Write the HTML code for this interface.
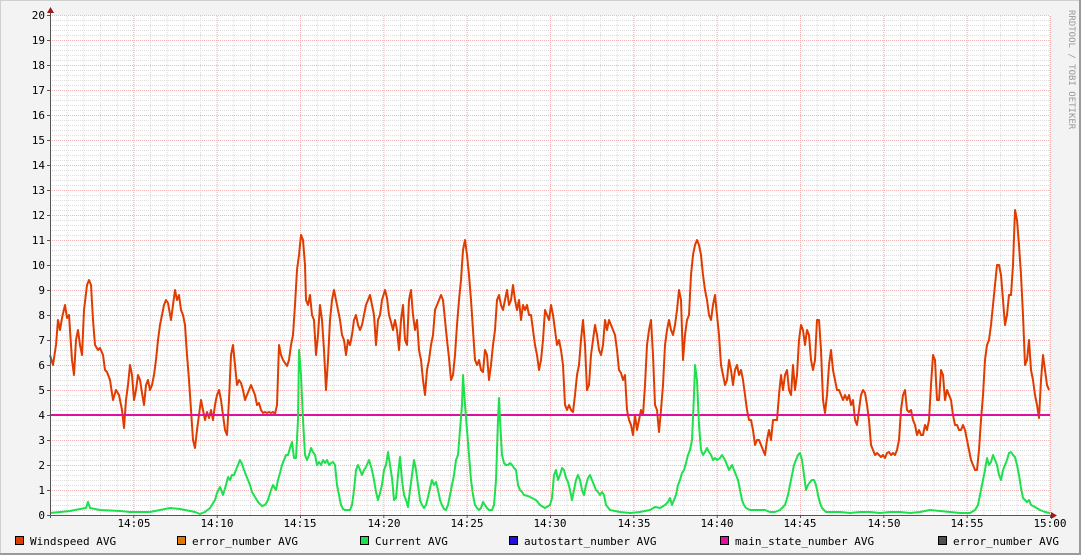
<!DOCTYPE html>
<html><head><meta charset="utf-8"><style>
html,body{margin:0;padding:0;background:#f3f3f3;}
svg{display:block;}
text{font-family:"DejaVu Sans Mono","Liberation Mono",monospace;}
</style></head><body>
<svg width="1081" height="555" viewBox="0 0 1081 555" xmlns="http://www.w3.org/2000/svg">
<defs>
<pattern id="minv" x="50" y="0" width="16.6667" height="555" patternUnits="userSpaceOnUse">
<line x1="0.5" y1="0" x2="0.5" y2="555" stroke="#dcdcdc" stroke-width="1" stroke-dasharray="1,1"/>
</pattern>
<pattern id="minh" x="0" y="15" width="1081" height="5" patternUnits="userSpaceOnUse">
<line x1="0" y1="0.5" x2="1081" y2="0.5" stroke="#dcdcdc" stroke-width="1" stroke-dasharray="1,1"/>
</pattern>
<pattern id="majv" x="50" y="0" width="83.3333" height="555" patternUnits="userSpaceOnUse">
<line x1="0.5" y1="0" x2="0.5" y2="555" stroke="#f0b4b4" stroke-width="1" stroke-dasharray="1,1"/>
</pattern>
<pattern id="majh" x="0" y="15" width="1081" height="25" patternUnits="userSpaceOnUse">
<line x1="0" y1="0.5" x2="1081" y2="0.5" stroke="#f0b4b4" stroke-width="1" stroke-dasharray="1,1"/>
</pattern>
</defs>
<rect x="0" y="0" width="1081" height="555" fill="#f3f3f3"/>
<rect x="0.5" y="0.5" width="1080" height="554" fill="none" stroke="#cfcfcf"/>
<line x1="0" y1="554" x2="1081" y2="554" stroke="#9a9a9a" stroke-width="2"/>
<line x1="1080" y1="0" x2="1080" y2="555" stroke="#9a9a9a" stroke-width="2"/>
<rect x="50" y="15" width="1000" height="500" fill="#ffffff"/>
<rect x="50" y="15" width="1001" height="500" fill="url(#minv)"/>
<rect x="50" y="15" width="1000" height="500" fill="url(#minh)"/>
<rect x="50" y="15" width="1001" height="500" fill="url(#majv)"/>
<rect x="50" y="15" width="1000" height="500" fill="url(#majh)"/>

<polyline fill="none" stroke="#e03c00" stroke-width="2" stroke-linejoin="round" points="50,355 53,365 56,345 58,320 60,330 62,318 65,305 67,318 69,315 72,360 74,375 76,340 78,330 80,345 82,355 84,310 87,285 89,280 91,285 93,320 95,345 98,350 100,348 103,355 105,370 107,372 110,380 113,400 116,390 119,395 122,410 124,428 126,400 128,385 130,365 132,375 134,400 136,390 138,375 140,380 142,393 144,405 146,385 148,380 150,390 152,385 154,375 156,360 158,340 160,325 162,315 164,305 166,300 168,303 171,320 173,305 175,290 177,300 179,295 181,310 183,315 185,325 187,355 189,380 191,410 193,440 195,448 197,430 199,415 201,400 203,410 205,420 207,412 209,418 211,410 213,420 215,405 217,395 219,390 221,400 223,415 225,430 227,435 229,400 231,355 233,345 235,365 237,385 239,380 241,383 243,390 245,400 247,395 249,390 251,385 253,390 255,395 257,405 259,403 261,410 263,413 265,412 267,413 269,412 271,413 273,412 275,414 277,405 279,345 281,355 283,360 285,363 287,366 289,360 291,345 293,335 295,305 297,270 299,255 301,235 303,240 305,265 306,300 308,305 310,295 312,315 314,320 316,355 318,335 320,305 322,320 324,350 326,390 328,360 330,320 332,300 334,290 336,300 338,310 340,320 342,335 344,340 346,355 348,340 350,345 352,335 354,320 356,315 358,325 360,330 362,325 364,315 366,305 368,300 370,295 372,305 374,315 376,345 378,320 380,315 382,300 385,290 387,298 389,315 391,322 393,330 395,320 397,330 399,350 401,320 403,305 405,340 407,345 409,300 411,290 413,315 415,330 417,320 419,350 421,360 423,380 425,395 427,370 429,360 431,345 433,335 435,310 437,305 439,300 441,295 443,300 445,320 447,340 449,358 451,380 453,375 455,355 457,325 459,300 461,280 463,250 465,240 467,255 469,275 471,300 473,330 475,360 477,365 479,360 481,370 483,372 485,350 487,355 489,380 491,365 493,345 495,330 497,300 499,295 501,305 503,310 505,300 507,290 509,305 511,300 513,285 515,300 517,310 519,300 521,320 523,305 525,310 527,305 529,315 531,315 533,330 535,345 537,355 539,370 541,360 543,340 545,310 547,315 549,320 551,305 553,315 555,330 557,345 559,340 561,350 563,365 565,405 567,410 569,405 571,410 573,412 575,395 577,375 579,365 581,340 583,320 585,345 587,390 589,385 591,355 593,340 595,325 597,335 599,350 601,355 603,345 605,320 607,330 609,320 611,325 613,330 615,335 617,350 619,370 621,373 623,380 625,375 627,410 629,420 631,425 633,435 635,415 637,430 639,420 641,410 643,415 645,385 647,345 649,330 651,320 653,355 655,405 657,410 659,432 661,410 663,385 665,345 667,330 669,320 671,330 673,335 675,325 677,310 679,290 681,300 683,360 685,335 687,320 689,315 691,275 693,255 695,245 697,240 699,245 701,255 703,275 705,290 707,300 709,315 711,320 713,305 715,295 717,315 719,335 721,365 723,375 725,385 727,380 729,360 731,370 733,385 735,370 737,365 739,375 741,370 743,380 745,395 747,410 749,420 751,420 753,430 755,445 757,440 759,440 761,445 763,450 765,455 767,440 769,430 771,440 773,420 775,420 777,420 779,395 781,375 783,390 785,375 787,370 789,390 791,395 793,365 795,390 797,375 799,340 801,325 803,330 805,345 807,330 809,335 811,360 813,370 815,360 817,320 819,320 821,350 823,400 825,413 827,395 829,365 831,350 833,370 835,380 837,390 839,390 841,395 843,400 845,395 847,400 849,395 851,405 853,400 855,420 857,425 859,410 861,395 863,390 865,393 867,405 869,420 871,445 873,450 875,455 877,453 879,455 881,457 883,455 885,458 887,453 889,452 891,455 893,453 895,455 897,450 899,440 901,410 903,395 905,390 907,410 909,412 911,410 913,420 915,425 917,435 919,430 921,435 923,435 925,425 927,430 929,420 931,385 933,355 935,360 937,400 939,400 941,370 943,375 945,400 947,390 949,395 951,400 953,415 955,425 957,425 959,430 961,430 963,425 965,430 967,440 969,450 971,460 973,465 975,470 977,470 979,450 981,420 983,395 985,360 987,345 989,340 991,325 993,305 995,285 997,265 999,265 1001,275 1003,300 1005,325 1007,315 1009,295 1011,295 1013,265 1015,210 1017,220 1019,245 1021,275 1023,315 1025,365 1027,360 1029,340 1031,370 1033,380 1035,395 1037,405 1039,418 1041,380 1043,355 1045,370 1047,385 1049,390"/>
<line x1="50" y1="415" x2="1050" y2="415" stroke="#e0109f" stroke-width="2"/>
<polyline fill="none" stroke="#1ee04c" stroke-width="2" stroke-linejoin="round" points="50,513 60,512 70,511 80,509 86,508 88,502 90,508 100,510 120,511 130,512 140,512 150,512 160,510 170,508 180,509 190,511 195,512 200,514 205,512 210,508 215,500 217,493 220,487 223,495 226,485 228,477 230,480 232,475 234,475 236,470 238,465 240,460 242,464 244,470 246,475 248,480 250,485 252,492 255,497 258,502 262,506 265,505 268,500 271,490 273,485 276,490 278,480 280,473 282,465 284,460 286,455 288,455 290,448 292,442 294,458 296,458 298,420 299,350 301,375 303,420 305,455 307,460 309,455 311,448 313,452 315,455 317,465 319,462 321,465 323,460 325,463 327,460 329,465 331,463 333,462 335,465 337,485 339,495 341,505 343,509 345,510 350,510 352,505 354,490 356,470 358,465 360,470 362,475 364,470 366,467 369,460 372,470 374,480 376,492 378,500 380,493 382,485 384,470 386,465 388,452 390,465 392,478 394,500 396,498 398,475 400,457 402,480 404,495 406,500 408,507 410,490 412,475 414,460 416,470 418,485 420,500 422,505 424,508 426,505 428,497 430,488 432,480 434,485 436,482 438,490 440,500 442,505 444,509 446,510 448,505 450,495 452,485 454,475 456,460 458,455 460,430 462,405 463,375 465,405 467,430 469,455 471,480 473,495 475,505 477,508 479,510 481,508 483,502 485,505 487,508 489,510 492,510 494,505 496,480 498,420 499,398 500,420 502,455 504,463 506,465 508,465 510,463 512,465 514,468 516,470 518,485 520,490 522,492 524,495 528,496 532,498 536,500 540,505 545,508 550,505 552,498 554,475 556,470 558,480 560,475 562,468 564,470 566,478 568,482 570,490 572,500 574,490 576,480 578,475 580,480 582,490 584,495 586,485 588,478 590,475 592,480 594,485 596,490 598,492 600,495 602,492 604,495 606,505 610,510 620,512 630,513 640,512 650,510 655,507 660,508 665,505 668,502 670,498 672,505 674,500 676,495 678,485 680,480 682,473 684,470 686,463 688,455 690,450 692,440 694,395 695,365 697,380 699,425 701,450 703,455 705,452 707,448 709,452 711,455 713,460 715,458 717,460 720,458 722,455 725,460 727,465 729,470 732,465 734,470 736,475 738,480 740,490 742,500 744,505 746,508 750,510 760,510 765,510 770,512 775,512 780,510 785,505 788,495 790,485 792,475 794,465 796,460 798,455 800,453 802,460 804,475 806,490 808,485 810,482 812,480 814,480 816,485 818,495 820,503 822,508 826,512 840,512 850,513 860,512 870,512 880,513 890,512 900,512 910,513 920,512 930,510 940,511 950,512 960,513 970,513 975,510 978,505 980,495 983,480 985,470 987,458 989,465 991,462 993,455 995,460 997,465 999,475 1001,480 1003,470 1005,465 1007,460 1009,453 1011,452 1013,455 1015,457 1017,465 1019,475 1021,488 1023,498 1025,500 1027,502 1029,500 1031,505 1035,507 1040,510 1045,512 1050,513"/>

<line x1="50.5" y1="12" x2="50.5" y2="518" stroke="#555" stroke-width="1"/>
<line x1="47" y1="515.5" x2="1053" y2="515.5" stroke="#555" stroke-width="1"/>
<polygon points="47,13 54,13 50.5,7" fill="#a01818"/>
<polygon points="1051,512 1051,519 1057,515.5" fill="#a01818"/>
<g stroke="#555" stroke-width="1">
<line x1="47" y1="15.5" x2="50" y2="15.5"/><line x1="47" y1="40.5" x2="50" y2="40.5"/><line x1="47" y1="65.5" x2="50" y2="65.5"/><line x1="47" y1="90.5" x2="50" y2="90.5"/><line x1="47" y1="115.5" x2="50" y2="115.5"/><line x1="47" y1="140.5" x2="50" y2="140.5"/><line x1="47" y1="165.5" x2="50" y2="165.5"/><line x1="47" y1="190.5" x2="50" y2="190.5"/><line x1="47" y1="215.5" x2="50" y2="215.5"/><line x1="47" y1="240.5" x2="50" y2="240.5"/><line x1="47" y1="265.5" x2="50" y2="265.5"/><line x1="47" y1="290.5" x2="50" y2="290.5"/><line x1="47" y1="315.5" x2="50" y2="315.5"/><line x1="47" y1="340.5" x2="50" y2="340.5"/><line x1="47" y1="365.5" x2="50" y2="365.5"/><line x1="47" y1="390.5" x2="50" y2="390.5"/><line x1="47" y1="415.5" x2="50" y2="415.5"/><line x1="47" y1="440.5" x2="50" y2="440.5"/><line x1="47" y1="465.5" x2="50" y2="465.5"/><line x1="47" y1="490.5" x2="50" y2="490.5"/>
<line x1="133.8" y1="515" x2="133.8" y2="518"/><line x1="217.2" y1="515" x2="217.2" y2="518"/><line x1="300.5" y1="515" x2="300.5" y2="518"/><line x1="383.8" y1="515" x2="383.8" y2="518"/><line x1="467.2" y1="515" x2="467.2" y2="518"/><line x1="550.5" y1="515" x2="550.5" y2="518"/><line x1="633.8" y1="515" x2="633.8" y2="518"/><line x1="717.2" y1="515" x2="717.2" y2="518"/><line x1="800.5" y1="515" x2="800.5" y2="518"/><line x1="883.8" y1="515" x2="883.8" y2="518"/><line x1="967.2" y1="515" x2="967.2" y2="518"/><line x1="1050.5" y1="515" x2="1050.5" y2="518"/>
</g>
<g font-size="11" fill="#000" text-anchor="end">
<text x="45" y="19">20</text><text x="45" y="44">19</text><text x="45" y="69">18</text><text x="45" y="94">17</text><text x="45" y="119">16</text><text x="45" y="144">15</text><text x="45" y="169">14</text><text x="45" y="194">13</text><text x="45" y="219">12</text><text x="45" y="244">11</text><text x="45" y="269">10</text><text x="45" y="294">9</text><text x="45" y="319">8</text><text x="45" y="344">7</text><text x="45" y="369">6</text><text x="45" y="394">5</text><text x="45" y="419">4</text><text x="45" y="444">3</text><text x="45" y="469">2</text><text x="45" y="494">1</text><text x="45" y="519">0</text>
</g>
<g font-size="11" fill="#000" text-anchor="middle">
<text x="134" y="527">14:05</text><text x="217" y="527">14:10</text><text x="300" y="527">14:15</text><text x="384" y="527">14:20</text><text x="467" y="527">14:25</text><text x="550" y="527">14:30</text><text x="634" y="527">14:35</text><text x="717" y="527">14:40</text><text x="800" y="527">14:45</text><text x="884" y="527">14:50</text><text x="967" y="527">14:55</text><text x="1050" y="527">15:00</text>
</g>
<text x="1069" y="10" font-size="9" fill="#999" transform="rotate(90 1069 10)">RRDTOOL / TOBI OETIKER</text>
<g stroke="#000" stroke-width="1">
<rect x="15.5" y="536.5" width="8" height="8" fill="#e03c00"/>
<rect x="177.5" y="536.5" width="8" height="8" fill="#e07800"/>
<rect x="360.5" y="536.5" width="8" height="8" fill="#1ee04c"/>
<rect x="509.5" y="536.5" width="8" height="8" fill="#2010e0"/>
<rect x="720.5" y="536.5" width="8" height="8" fill="#e010a0"/>
<rect x="938.5" y="536.5" width="8" height="8" fill="#505050"/>
</g>
<g font-size="11" fill="#000">
<text x="30" y="545">Windspeed AVG</text>
<text x="192" y="545">error_number AVG</text>
<text x="375" y="545">Current AVG</text>
<text x="524" y="545">autostart_number AVG</text>
<text x="735" y="545">main_state_number AVG</text>
<text x="953" y="545">error_number AVG</text>
</g>
</svg>
</body></html>
